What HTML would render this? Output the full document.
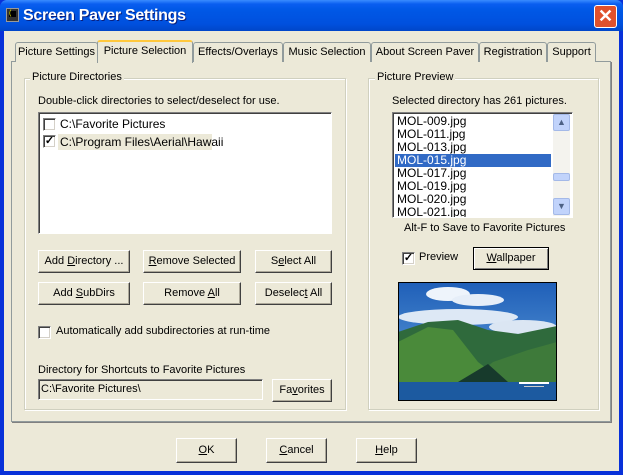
<!DOCTYPE html>
<html><head><meta charset="utf-8"><style>
*{margin:0;padding:0;box-sizing:border-box}
body{width:623px;height:475px;overflow:hidden;background:#0831d9;font-family:"Liberation Sans",Arial,sans-serif;font-size:11px;color:#000;position:relative}
.a{position:absolute;white-space:nowrap}
#title{left:0;top:0;width:623px;height:31px;background:linear-gradient(#3a8cff 0,#0a5ef0 4px,#0058e6 10px,#0050de 24px,#0046c8 31px);border-radius:7px 7px 0 0}
#body{left:4px;top:31px;width:615px;height:440px;background:#ece9d8}
.btn{position:absolute;background:#ece9d8;border:1px solid;border-color:#fff #404040 #404040 #fff;box-shadow:inset -1px -1px 0 #aca899;text-align:center;font-size:11px;white-space:nowrap}
.tab{position:absolute;top:42px;height:20px;background:#ece9d8;border:1px solid #919b9c;border-bottom:none;text-align:center;line-height:18px;font-size:11px;border-radius:3px 3px 0 0;white-space:nowrap}
.grp{position:absolute;border:1px solid #d0d0bf;box-shadow:inset 1px 1px 0 #fff,1px 1px 0 #fff}
.gl{position:absolute;background:#ece9d8;padding:0 2px;font-size:11px}
.sunk{position:absolute;background:#fff;border:1px solid;border-color:#808080 #fff #fff #808080;box-shadow:inset 1px 1px 0 #404040}
.cb{position:absolute;width:13px;height:13px;background:#fff;border:1px solid;border-color:#808080 #fff #fff #808080;box-shadow:inset 1px 1px 0 #404040,inset -1px -1px 0 #d4d0c8}
.li{height:13px;line-height:13px;padding-left:2px;font-size:12px;white-space:nowrap}
u{text-decoration:underline}
</style></head><body>
<div id="title" class="a"></div>
<div class="a" style="left:6px;top:8px;width:13px;height:14px;background:#333;border:1px solid #999"><div style="position:absolute;left:2px;top:2px;width:7px;height:6px;background:#000;color:#ff0;font-size:7px;line-height:6px">(</div></div>
<div class="a" style="left:23px;top:7px;color:#fff;font-weight:bold;font-size:16px;letter-spacing:-0.3px;text-shadow:1px 1px 0 #0a1f7c">Screen Paver Settings</div>
<div class="a" style="left:594px;top:5px;width:23px;height:23px;background:#e0512c;border:1px solid #fff;border-radius:3px;color:#fff;font-weight:bold;font-size:18px;line-height:20px;text-align:center">✕</div>
<div id="body" class="a"></div>

<div class="a" style="left:11px;top:61px;width:600px;height:361px;border:1px solid #919b9c;box-shadow:1px 1px 0 #808080;background:#ece9d8"></div>
<div class="tab" style="left:15px;width:83px">Picture Settings</div>
<div class="tab" style="left:193px;width:90px">Effects/Overlays</div>
<div class="tab" style="left:283px;width:88px">Music Selection</div>
<div class="tab" style="left:371px;width:108px">About Screen Paver</div>
<div class="tab" style="left:479px;width:68px">Registration</div>
<div class="tab" style="left:547px;width:49px">Support</div>
<div class="tab" style="left:97px;top:40px;width:96px;height:23px;line-height:19px;border-top:2px solid #ffc83c">Picture Selection</div>

<div class="grp" style="left:24px;top:78px;width:322px;height:332px"></div>
<div class="gl" style="left:30px;top:71px">Picture Directories</div>
<div class="a" style="left:38px;top:95px">Double-click directories to select/deselect for use.</div>
<div class="sunk" style="left:38px;top:112px;width:294px;height:122px"></div>
<div class="cb" style="left:43px;top:118px"></div>
<div class="a li" style="left:58px;top:118px">C:\Favorite Pictures</div>
<div class="cb" style="left:43px;top:135px;font-size:11px;line-height:10px;text-align:center;font-weight:bold">✓</div>
<div class="a li" style="left:58px;top:134px;background:#ece9d8;width:154px;height:16px;line-height:16px">C:\Program Files\Aerial\Hawaii</div>

<div class="btn" style="left:38px;top:250px;width:92px;height:23px;line-height:21px">Add <u>D</u>irectory ...</div>
<div class="btn" style="left:143px;top:250px;width:98px;height:23px;line-height:21px"><u>R</u>emove Selected</div>
<div class="btn" style="left:255px;top:250px;width:77px;height:23px;line-height:21px">S<u>e</u>lect All</div>
<div class="btn" style="left:38px;top:282px;width:92px;height:23px;line-height:21px">Add <u>S</u>ubDirs</div>
<div class="btn" style="left:143px;top:282px;width:98px;height:23px;line-height:21px">Remove <u>A</u>ll</div>
<div class="btn" style="left:255px;top:282px;width:77px;height:23px;line-height:21px">Deselec<u>t</u> All</div>
<div class="cb" style="left:38px;top:326px"></div>
<div class="a" style="left:56px;top:325px">Automatically add subdirectories at run-time</div>
<div class="a" style="left:38px;top:364px">Directory for Shortcuts to Favorite Pictures</div>
<div class="a" style="left:38px;top:379px;width:225px;height:21px;border:1px solid;border-color:#808080 #fff #fff #808080;box-shadow:inset 1px 1px 0 #404040;padding:3px 2px">C:\Favorite Pictures\</div>
<div class="btn" style="left:272px;top:379px;width:60px;height:23px;line-height:21px">Fa<u>v</u>orites</div>

<div class="grp" style="left:368px;top:78px;width:231px;height:332px"></div>
<div class="gl" style="left:375px;top:71px">Picture Preview</div>
<div class="a" style="left:392px;top:95px">Selected directory has 261 pictures.</div>
<div class="sunk" style="left:392px;top:112px;width:181px;height:106px;overflow:hidden;padding:2px 0 0 2px">
<div class="li">MOL-009.jpg</div><div class="li">MOL-011.jpg</div><div class="li">MOL-013.jpg</div>
<div class="li" style="background:#316ac5;color:#fff;width:156px">MOL-015.jpg</div>
<div class="li">MOL-017.jpg</div><div class="li">MOL-019.jpg</div><div class="li">MOL-020.jpg</div><div class="li">MOL-021.jpg</div>
</div>
<div class="a" style="left:553px;top:114px;width:17px;height:102px;background:#f4f3ee"></div>
<div class="a" style="left:553px;top:114px;width:17px;height:17px;background:#c1d3fb;border:1px solid #a4b9e8;border-radius:2px;color:#4d6185;font-size:9px;text-align:center;line-height:15px">▲</div>
<div class="a" style="left:553px;top:173px;width:17px;height:8px;background:#c1d3fb;border:1px solid #a4b9e8;border-radius:2px"></div>
<div class="a" style="left:553px;top:198px;width:17px;height:17px;background:#c1d3fb;border:1px solid #a4b9e8;border-radius:2px;color:#4d6185;font-size:9px;text-align:center;line-height:15px">▼</div>
<div class="a" style="left:404px;top:222px">Alt-F to Save to Favorite Pictures</div>
<div class="cb" style="left:402px;top:252px;font-size:11px;line-height:10px;text-align:center;font-weight:bold">✓</div>
<div class="a" style="left:419px;top:251px">Preview</div>
<div class="btn" style="left:473px;top:247px;width:76px;height:23px;line-height:21px;border:1px solid #000;box-shadow:inset 1px 1px 0 #fff,inset -1px -1px 0 #808080"><u>W</u>allpaper</div>
<svg class="a" style="left:398px;top:282px" width="159" height="119" viewBox="0 0 159 119">
<defs><linearGradient id="s" x1="0" y1="0" x2="0" y2="1"><stop offset="0" stop-color="#1f5fb8"/><stop offset="1" stop-color="#6aa8e0"/></linearGradient></defs>
<rect width="159" height="119" fill="url(#s)"/>
<ellipse cx="50" cy="12" rx="22" ry="7" fill="#eef4fb"/><ellipse cx="80" cy="18" rx="26" ry="6" fill="#e6eef8"/>
<ellipse cx="60" cy="35" rx="60" ry="8" fill="#dde8f5"/><ellipse cx="125" cy="45" rx="34" ry="7" fill="#dbe6f3"/>
<path d="M0 50 L30 40 L60 38 L90 48 L120 52 L159 44 L159 119 L0 119Z" fill="#2f6a3c"/>
<path d="M0 60 L30 45 L55 48 L80 80 L100 95 L70 100 L0 100Z" fill="#4a8a3a"/>
<path d="M70 100 L95 80 L130 68 L159 60 L159 105 L100 105Z" fill="#3e7a3a"/>
<path d="M60 100 L90 82 L110 100Z" fill="#173a2c"/>
<rect y="100" width="159" height="19" fill="#1c5aa0"/>
<rect x="121" y="100" width="30" height="2" fill="#fff"/><rect x="126" y="104" width="20" height="1" fill="#ccc"/>
<rect x="0.5" y="0.5" width="158" height="118" fill="none" stroke="#000"/>
</svg>

<div class="btn" style="left:176px;top:438px;width:61px;height:25px;line-height:23px"><u>O</u>K</div>
<div class="btn" style="left:266px;top:438px;width:61px;height:25px;line-height:23px"><u>C</u>ancel</div>
<div class="btn" style="left:356px;top:438px;width:61px;height:25px;line-height:23px"><u>H</u>elp</div>
</body></html>
